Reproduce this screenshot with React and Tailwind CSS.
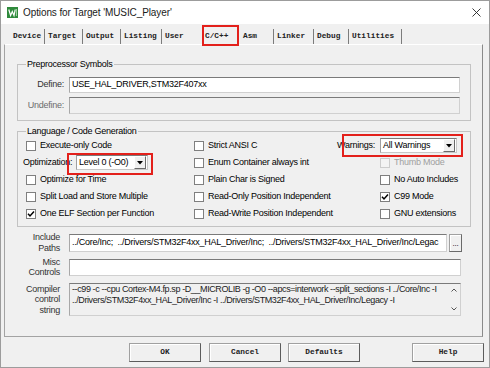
import React from "react";

const tabs = [
  { label: "Device", w: "w-[35px]", line: true },
  { label: "Target", w: "w-[38px]", line: true },
  { label: "Output", w: "w-[38px]", line: true },
  { label: "Listing", w: "w-[41px]", line: true },
  { label: "User", w: "w-[37px]", line: false },
  { label: "C/C++", w: "w-[41px]", line: false, active: true },
  { label: "Asm", w: "w-[34px]", line: true },
  { label: "Linker", w: "w-[40px]", line: true },
  { label: "Debug", w: "w-[35px]", line: true },
  { label: "Utilities", w: "w-[53px]", line: true },
];

function Check({ checked, disabled }) {
  return (
    <span
      className={`w-[10px] h-[10px] shrink-0 border flex items-center justify-center ${
        disabled ? "border-[#cccccc] bg-[#f3f3f3]" : "border-[#7f7f7f] bg-white"
      }`}
    >
      {checked && (
        <svg width="8" height="8" viewBox="0 0 8 8">
          <path d="M1 3.8 L3 6 L7 1.5" fill="none" stroke="#000" strokeWidth="1.5" />
        </svg>
      )}
    </span>
  );
}

function CheckItem({ label, checked, disabled }) {
  return (
    <div className="flex items-center gap-[4px]">
      <Check checked={checked} disabled={disabled} />
      <span className={disabled ? "text-[#a0a0a0]" : ""}>{label}</span>
    </div>
  );
}

function Select({ value, className }) {
  return (
    <div
      className={`h-[15px] flex items-center bg-white border border-[#c8c8c8] border-t-[#7a7a7a] border-l-[#a0a0a0] ${className}`}
    >
      <span className="flex-1 pl-[2px] whitespace-nowrap">{value}</span>
      <span className="w-[12px] h-[13px] mr-[1px] flex items-center justify-center bg-[#f0f0f0] border border-[#ffffff] border-r-[#6a6a6a] border-b-[#6a6a6a]">
        <svg width="6" height="4" viewBox="0 0 6 4">
          <path d="M0 0 H6 L3 3.5 Z" fill="#000" />
        </svg>
      </span>
    </div>
  );
}

function Group({ title, className, children }) {
  return (
    <div className={`border border-[#c3c3c3] ${className}`}>
      <div className="-mt-[7px] ml-[8px] w-fit px-[1px] bg-[#f0f0f0] leading-[12px]">{title}</div>
      {children}
    </div>
  );
}

const field = "border border-[#d0d0d0] border-t-[#7a7a7a] border-l-[#a8a8a8]";

export default function App() {
  const rows = [
    [
      <CheckItem label="Execute-only Code" />,
      <CheckItem label="Strict ANSI C" />,
      <div className="flex items-center">
        <span className="w-[43px]">Warnings:</span>
        <Select value="All Warnings" className="w-[77px]" />
      </div>,
    ],
    [
      <div className="flex items-center -ml-[3px]">
        <span className="w-[53px]">Optimization:</span>
        <Select value="Level 0 (-O0)" className="w-[72px]" />
      </div>,
      <CheckItem label="Enum Container always int" />,
      <div className="pl-[43px]">
        <CheckItem label="Thumb Mode" disabled />
      </div>,
    ],
    [
      <CheckItem label="Optimize for Time" />,
      <CheckItem label="Plain Char is Signed" />,
      <div className="pl-[43px]">
        <CheckItem label="No Auto Includes" />
      </div>,
    ],
    [
      <CheckItem label="Split Load and Store Multiple" />,
      <CheckItem label="Read-Only Position Independent" />,
      <div className="pl-[43px]">
        <CheckItem label="C99 Mode" checked />
      </div>,
    ],
    [
      <CheckItem label="One ELF Section per Function" checked />,
      <CheckItem label="Read-Write Position Independent" />,
      <div className="pl-[43px]">
        <CheckItem label="GNU extensions" />
      </div>,
    ],
  ];

  return (
    <div className="relative w-[490px] h-[368px] overflow-hidden bg-[#f0f0f0] border border-[#9c9c9c] font-['Liberation_Sans',Arial,sans-serif] text-[9px] tracking-[-0.25px] text-black">
      {/* title bar */}
      <div className="h-[23px] bg-white flex items-center pl-[6px] pr-[8px]">
        <svg width="11" height="11" viewBox="0 0 11 11">
          <rect width="11" height="11" fill="#2f8a3c" />
          <path d="M1.8 2.5 L3.6 8.5 L5.3 4.5 L7 8.5 L8.2 2.5" fill="none" stroke="#fff" strokeWidth="1.2" />
          <path d="M9.4 2 V9" stroke="#cde8c8" strokeWidth="0.8" />
        </svg>
        <span className="ml-[5px] text-[10px] tracking-[-0.1px] text-[#1a1a1a]">
          Options for Target 'MUSIC_Player'
        </span>
        <svg className="ml-auto" width="9" height="9" viewBox="0 0 9 9">
          <path d="M0.5 0.5 L8.5 8.5 M8.5 0.5 L0.5 8.5" stroke="#222" strokeWidth="0.9" />
        </svg>
      </div>

      {/* tabs */}
      <div className="h-[20px] flex items-end pl-[9px] font-['Liberation_Mono','Courier_New',monospace] text-[7.8px] tracking-normal font-bold text-[#222]">
        {tabs.map((t) => (
          <div
            key={t.label}
            className={`${t.w} h-[15px] flex items-center ${t.active ? "pl-[6px]" : "pl-[3px]"} ${
              t.line ? "border-r border-[#7c7c7c]" : ""
            }`}
          >
            {t.label}
          </div>
        ))}
      </div>

      {/* page */}
      <div className="ml-[3px] w-[479px] h-[293px] border border-t-[#ffffff] border-[#a3a3a3] border-r-[#8a8a8a]">
        <Group title="Preprocessor Symbols" className="mt-[19px] ml-[12px] w-[454px] h-[57px]">
          <div className="mt-[7px] flex items-center h-[16px]">
            <span className="w-[46px] text-right text-[#333]">Define:</span>
            <div className={`ml-[5px] w-[391px] h-[16px] bg-white flex items-center pl-[2px] ${field}`}>
              USE_HAL_DRIVER,STM32F407xx
            </div>
          </div>
          <div className="mt-[4px] flex items-center h-[17px]">
            <span className="w-[46px] text-right text-[#6d6d6d]">Undefine:</span>
            <div className={`ml-[5px] w-[391px] h-[17px] bg-[#f0f0f0] ${field}`} />
          </div>
        </Group>

        <Group title="Language / Code Generation" className="mt-[10px] ml-[12px] w-[454px] h-[96px]">
          <div className="grid grid-cols-[168px_143px_1fr] pl-[8px]">
            {rows.map((r, i) =>
              r.map((cell, j) => (
                <div key={`${i}-${j}`} className="h-[17px] flex items-center whitespace-nowrap">
                  {cell}
                </div>
              ))
            )}
          </div>
        </Group>

        <div className="ml-[12px] mt-[5px]">
          <div className="flex items-center h-[22px]">
            <div className="w-[43px] text-right leading-[11px] text-[#333]">
              Include
              <br />
              Paths
            </div>
            <div className={`ml-[9px] w-[378px] h-[18px] bg-white flex items-center pl-[2px] overflow-hidden whitespace-pre ${field}`}>
              {"../Core/Inc;  ../Drivers/STM32F4xx_HAL_Driver/Inc;  ../Drivers/STM32F4xx_HAL_Driver/Inc/Legac"}
            </div>
            <div className="ml-[2px] w-[13px] h-[18px] flex items-end justify-center pb-[3px] leading-none bg-[#f0f0f0] border border-[#a0a0a0] border-r-[#6a6a6a] border-b-[#6a6a6a] shadow-[inset_1px_1px_0_#fff] text-[8px]">
              ...
            </div>
          </div>

          <div className="mt-[2px] flex items-center h-[22px]">
            <div className="w-[43px] text-right leading-[10.5px] text-[#333]">
              Misc
              <br />
              Controls
            </div>
            <div className={`ml-[9px] w-[392px] h-[17px] bg-white ${field}`} />
          </div>

          <div className="mt-[5px] flex items-center">
            <div className="w-[43px] text-right leading-[10.5px] text-[#333]">
              Compiler
              <br />
              control
              <br />
              string
            </div>
            <div className={`ml-[9px] w-[392px] h-[33px] bg-[#f0f0f0] flex ${field}`}>
              <div className="flex-1 pl-[2px] leading-[11px] tracking-[-0.4px] overflow-hidden whitespace-nowrap text-[#222]">
                <div>--c99 -c --cpu Cortex-M4.fp.sp -D__MICROLIB -g -O0 --apcs=interwork --split_sections -I ../Core/Inc -I</div>
                <div>../Drivers/STM32F4xx_HAL_Driver/Inc -I ../Drivers/STM32F4xx_HAL_Driver/Inc/Legacy -I</div>
              </div>
              <div className="w-[13px] flex flex-col items-center justify-between py-[4px]">
                <svg width="6" height="4" viewBox="0 0 6 4">
                  <path d="M0.5 3.5 L3 1 L5.5 3.5" fill="none" stroke="#555" strokeWidth="1" />
                </svg>
                <svg width="6" height="4" viewBox="0 0 6 4">
                  <path d="M0.5 0.5 L3 3 L5.5 0.5" fill="none" stroke="#555" strokeWidth="1" />
                </svg>
              </div>
            </div>
          </div>
        </div>
      </div>

      {/* buttons */}
      <div className="mt-[6px] flex font-['Liberation_Mono','Courier_New',monospace] text-[7.8px] tracking-normal font-bold text-[#222]">
        {[
          ["OK", "ml-[128px]"],
          ["Cancel", "ml-[8px]"],
          ["Defaults", "ml-[7px]"],
          ["Help", "ml-[52px]"],
        ].map(([label, m]) => (
          <div
            key={label}
            className={`${m} w-[72px] h-[19px] flex items-center justify-center bg-[#f0f0f0] border border-[#a0a0a0] border-r-[#5c5c5c] border-b-[#5c5c5c] shadow-[inset_1px_1px_0_#fff]`}
          >
            {label}
          </div>
        ))}
      </div>

      {/* red annotation boxes */}
      <div className="absolute left-[201px] top-[24px] w-[37px] h-[21px] border-2 border-[#e3201b]" />
      <div className="absolute left-[66px] top-[152px] w-[86px] h-[22px] border-2 border-[#e3201b]" />
      <div className="absolute left-[341px] top-[133px] w-[121px] h-[23px] border-2 border-[#e3201b]" />
    </div>
  );
}
